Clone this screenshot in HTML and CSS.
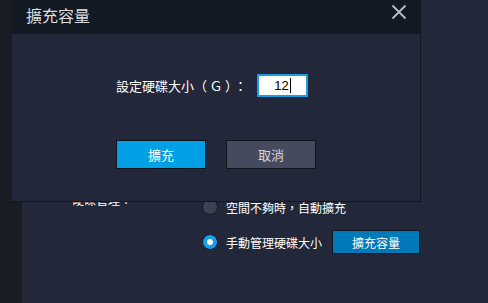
FILE: index.html
```html
<!DOCTYPE html>
<html>
<head>
<meta charset="utf-8">
<link rel="stylesheet" href="styles.css">
</head>
<body>
<div class="page">
  <div class="strip"></div>
  <div class="main">
    <div class="settings">
      <div class="label">硬碟管理：</div>
      <div class="options">
        <div class="opt">
          <span class="radio"></span>
          <span class="opt-text">空間不夠時，自動擴充</span>
        </div>
        <div class="opt">
          <span class="radio on"></span>
          <span class="opt-text">手動管理硬碟大小</span>
          <button class="expand-btn">擴充容量</button>
        </div>
      </div>
    </div>
  </div>
</div>
<div class="dialog">
  <div class="dlg-head">
    <span class="dlg-title">擴充容量</span>
    <svg class="close" width="16" height="16" viewBox="0 0 16 16"><path d="M1.5 1.5 L14.5 14.5 M14.5 1.5 L1.5 14.5" stroke="#b9bcc2" stroke-width="1.8" fill="none"/></svg>
  </div>
  <div class="dlg-body">
    <div class="field">
      <span class="field-label">設定硬碟大小<span class="fw">（Ｇ）：</span></span>
      <div class="input"><span class="val">12</span><span class="caret"></span></div>
    </div>
    <div class="actions">
      <button class="btn primary">擴充</button>
      <button class="btn secondary">取消</button>
    </div>
  </div>
</div>
</body>
</html>
```

FILE: styles.css
```css
html, body {
  margin: 0;
  padding: 0;
}
body {
  width: 488px;
  height: 303px;
  overflow: hidden;
  background: #22283a;
  font-family: "Noto Sans CJK TC", "Noto Sans", sans-serif;
  color: #ffffff;
  position: relative;
}
.page {
  display: flex;
  height: 303px;
}
.strip {
  width: 22px;
  background: #191c23;
  flex: none;
}
.main {
  flex: 1;
  padding-top: 192px;
}
.settings {
  display: flex;
  padding-left: 50px;
}
.label {
  width: 130px;
  font-size: 12px;
  line-height: 16px;
  color: #ffffff;
}
.options {
  display: flex;
  flex-direction: column;
  gap: 11px;
  margin-top: 3px;
}
.opt {
  display: flex;
  align-items: center;
  height: 24px;
}
.radio {
  width: 14px;
  height: 14px;
  border-radius: 50%;
  border: 1px solid #161a24;
  background: #3d4152;
  box-sizing: content-box;
  margin-right: 8px;
  position: relative;
}
.radio.on {
  background: #159eea;
}
.radio.on::after {
  content: "";
  position: absolute;
  left: 4px;
  top: 4px;
  width: 6px;
  height: 6px;
  border-radius: 50%;
  background: #ffffff;
}
.opt-text {
  font-size: 12px;
  color: #ffffff;
}
.expand-btn {
  margin-left: 10px;
  width: 88px;
  height: 24px;
  background: #0079b8;
  border: 1px solid #111522;
  color: #ffffff;
  font-family: inherit;
  font-size: 12px;
  padding: 0;
}
.dialog {
  position: absolute;
  left: 12px;
  top: 0;
  width: 408px;
  height: 201px;
  background: #222739;
  border-right: 1px solid #121620;
  border-bottom: 1px solid #121620;
  display: flex;
  flex-direction: column;
}
.dlg-head {
  height: 34px;
  background: #121923;
  display: flex;
  align-items: center;
  justify-content: space-between;
  padding: 0 13px 0 14px;
}
.dlg-title {
  font-size: 16px;
  color: #dcdde0;
  margin-top: -5px;
}
.close {
  margin-top: -11px;
}
.dlg-body {
  display: flex;
  flex-direction: column;
  padding-left: 104px;
  padding-top: 40px;
}
.field {
  display: flex;
  align-items: center;
}
.field-label {
  font-size: 13px;
  width: 141px;
  color: #ffffff;
  white-space: nowrap;
}
.fw {
  letter-spacing: 2.5px;
}
.input {
  width: 47px;
  height: 19px;
  border: 2px solid #1a9de2;
  background: #ffffff;
  display: flex;
  align-items: center;
  justify-content: center;
  color: #000000;
  font-size: 13px;
}
.val {
  font-family: "Liberation Sans", sans-serif;
  font-size: 13px;
}
.caret {
  width: 1px;
  height: 15px;
  background: #000;
  margin-left: 1px;
}
.actions {
  display: flex;
  gap: 20px;
  margin-top: 43px;
}
.btn {
  width: 90px;
  height: 29px;
  border: 1px solid #0f131c;
  font-family: inherit;
  font-size: 13px;
  padding: 0;
}
.btn.primary {
  background: #00a0e6;
  color: #ffffff;
}
.btn.secondary {
  background: #454a5e;
  color: #d2d4da;
}
```
